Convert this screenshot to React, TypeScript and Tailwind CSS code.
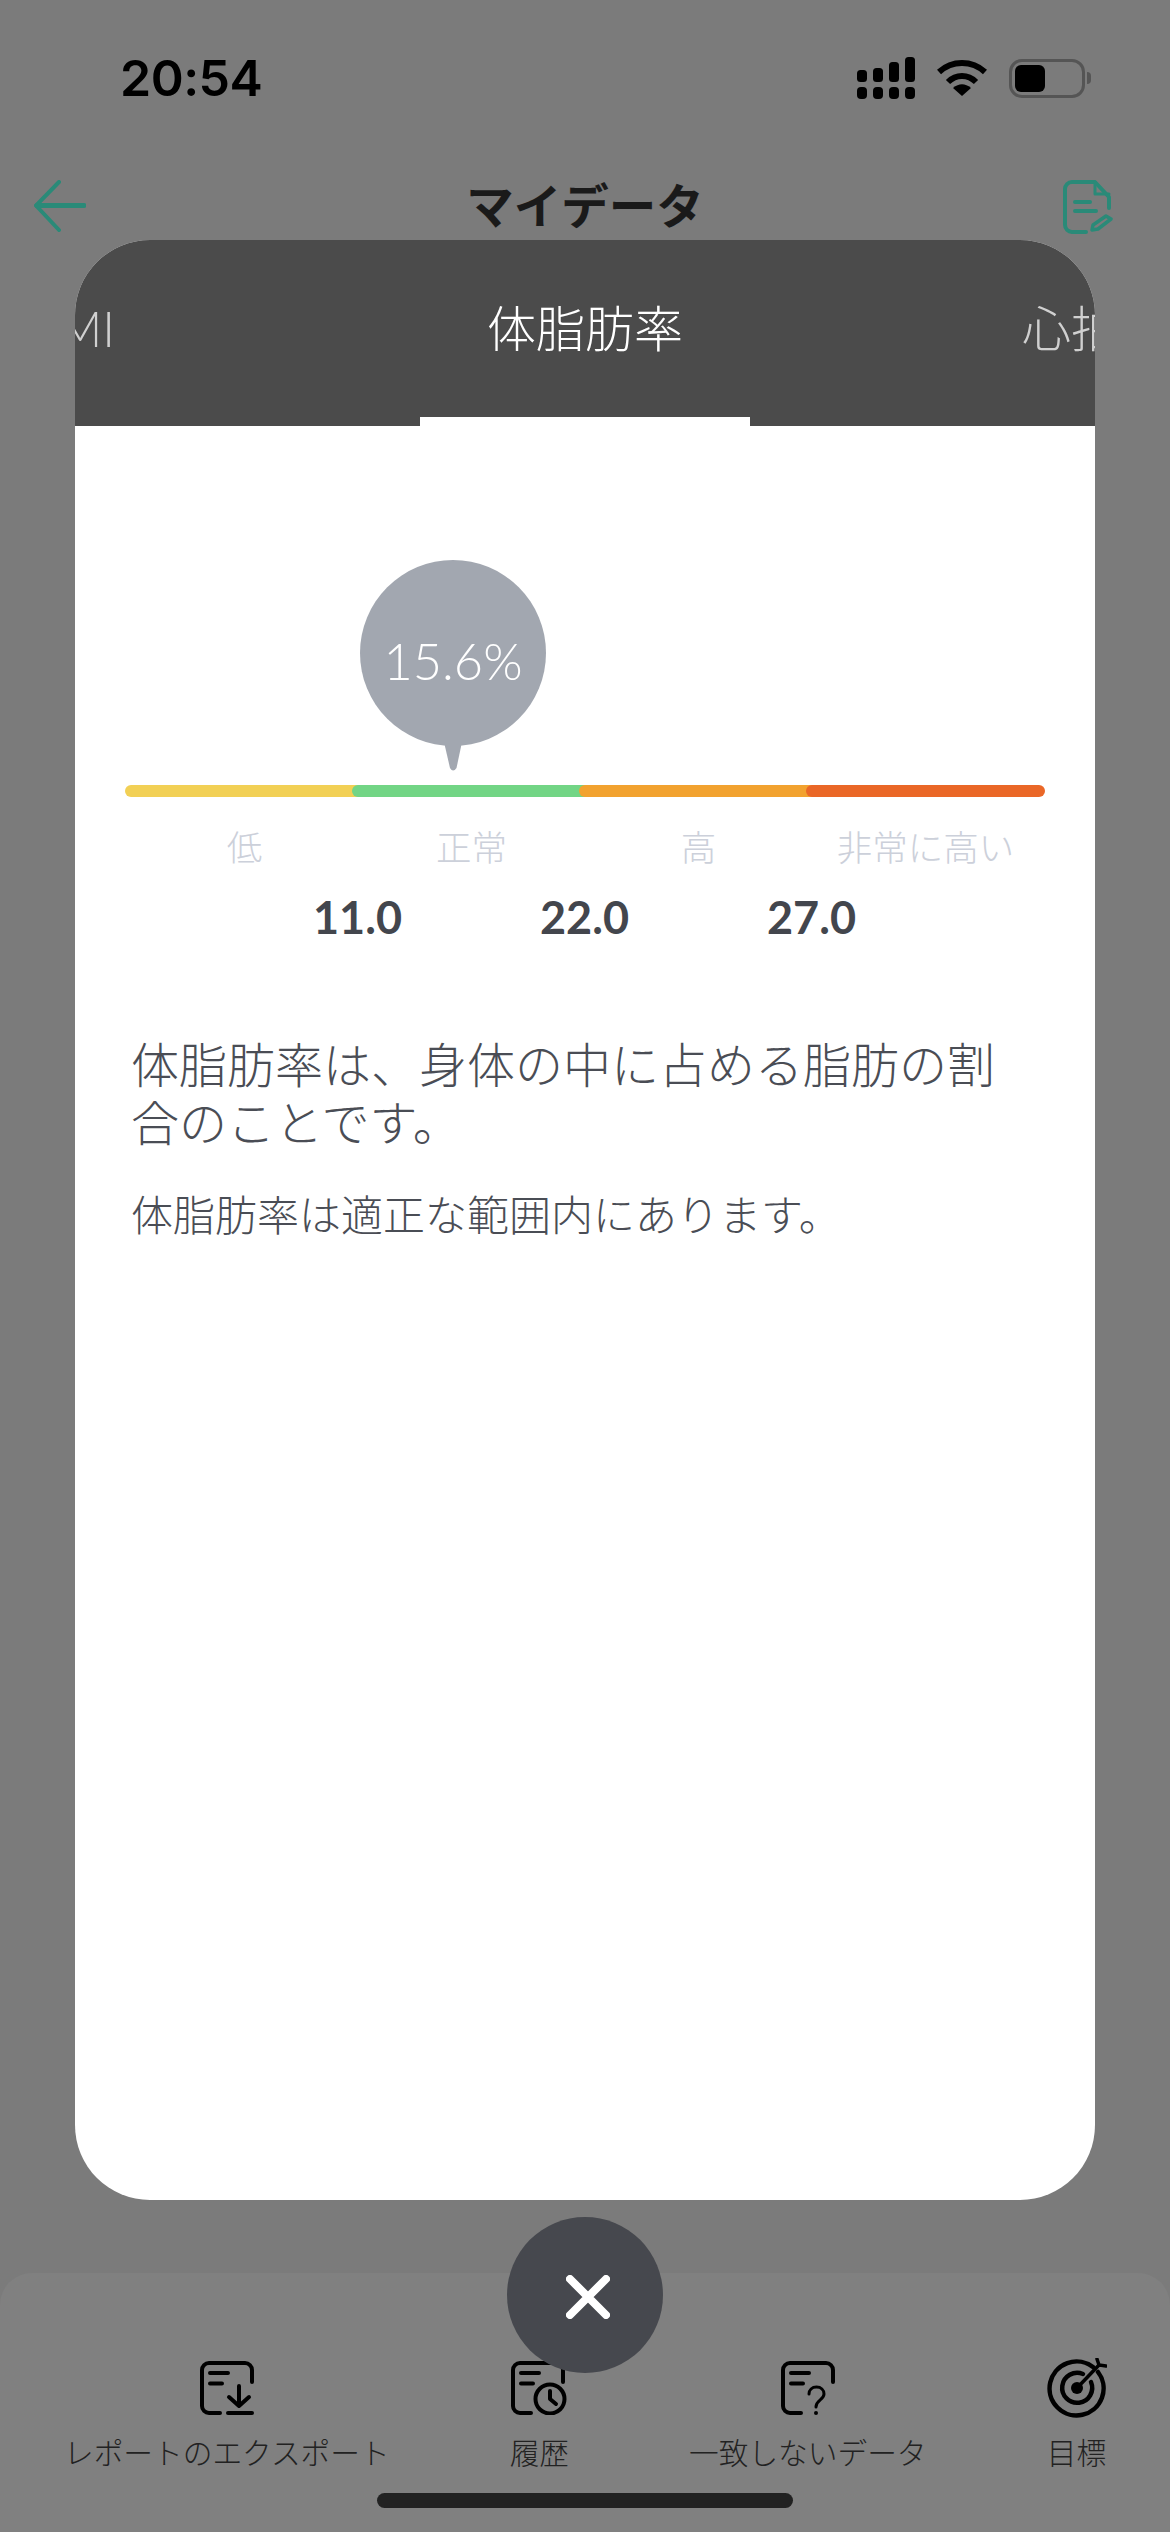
const teal = "#2a8a78";

function SignalIcon() {
  return (
    <svg width="58" height="42" viewBox="0 0 58 42" fill="#000">
      <rect x="0" y="13" width="10" height="12" rx="3.5" />
      <rect x="16" y="11" width="10" height="14" rx="3.5" />
      <rect x="32" y="5" width="10" height="20" rx="3.5" />
      <rect x="48" y="0" width="10" height="25" rx="3.5" />
      <rect x="0" y="30" width="10" height="12" rx="4" />
      <rect x="16" y="30" width="10" height="12" rx="4" />
      <rect x="32" y="30" width="10" height="12" rx="4" />
      <rect x="48" y="30" width="10" height="12" rx="4" />
    </svg>
  );
}

function WifiIcon() {
  return (
    <svg width="50" height="38" viewBox="0 0 50 38" fill="none" stroke="#000" strokeWidth="6">
      <path d="M2 13C15 1 35 1 48 13" />
      <path d="M11 23C19 15 31 15 39 23" />
      <path d="M25 37L16 29C22 24 28 24 34 29Z" fill="#000" stroke="none" />
    </svg>
  );
}

function BatteryIcon() {
  return (
    <div className="flex items-center">
      <div className="flex h-[39px] w-[76px] items-center rounded-[13px] border-[3px] border-[#555555] p-[3px]">
        <div className="h-[27px] w-[30px] rounded-[6px] bg-black" />
      </div>
      <div className="ml-[2px] h-[12px] w-[4px] rounded-r-full bg-[#555555]" />
    </div>
  );
}

function BackIcon() {
  return (
    <svg width="52" height="52" viewBox="0 0 52 52" fill="none" stroke={teal} strokeWidth="5" strokeLinecap="round">
      <path d="M25 2L2 25.500L25 50" strokeWidth="4" />
      <path d="M3 25.500H50" />
    </svg>
  );
}

function EditIcon() {
  return (
    <svg width="50" height="54" viewBox="0 0 50 54" fill="none" stroke={teal} strokeWidth="4" strokeLinecap="round" strokeLinejoin="round">
      <path d="M23 52H9a7 7 0 0 1-7-7V9a7 7 0 0 1 7-7h23l14 15v11" />
      <path d="M32 2v12h14" strokeWidth="3" />
      <path d="M12 22h15M12 31h21" />
      <path d="M29 50l1-5 13-9 5 3-13 10z" strokeWidth="3.500" />
    </svg>
  );
}

function DocOutline() {
  return <path d="M52 21V9a7 7 0 0 0-7-7H9a7 7 0 0 0-7 7v36a7 7 0 0 0 7 7h11" />;
}

function ExportIcon() {
  return (
    <svg width="54" height="54" viewBox="0 0 54 54" fill="none" stroke="#000" strokeWidth="4" strokeLinecap="round" strokeLinejoin="round">
      <DocOutline />
      <path d="M10 12h18M10 22.500h12" />
      <path d="M39 25v19M29 36l10 9 10-9" />
      <path d="M28 52h24" />
    </svg>
  );
}

function HistoryIcon() {
  return (
    <svg width="56" height="54" viewBox="0 0 56 54" fill="none" stroke="#000" strokeWidth="4" strokeLinecap="round" strokeLinejoin="round">
      <DocOutline />
      <path d="M10 12h18M10 22.500h12" />
      <circle cx="39" cy="38" r="14.500" />
      <path d="M39 30v8l6 5" />
    </svg>
  );
}

function QuestionIcon() {
  return (
    <svg width="54" height="54" viewBox="0 0 54 54" fill="none" stroke="#000" strokeWidth="4" strokeLinecap="round" strokeLinejoin="round">
      <DocOutline />
      <path d="M10 12h18M10 22.500h12" />
      <path d="M28 33c0-4 3-7 7.500-7s7.500 3 7.500 7c0 6-8 6-8 13" strokeWidth="3" />
      <circle cx="35" cy="52" r="2" fill="#000" stroke="none" />
    </svg>
  );
}

function TargetIcon() {
  return (
    <svg width="60" height="60" viewBox="0 0 60 60" fill="none" stroke="#000" strokeWidth="4.500" strokeLinecap="round">
      <path d="M46 9A27 27 0 1 0 51 14" />
      <path d="M36 16A15 15 0 1 0 44 24" />
      <circle cx="30" cy="30" r="6" fill="#000" stroke="none" />
      <path d="M30 30L52 7M50 1l2 6 7 1" strokeWidth="3.500" />
    </svg>
  );
}

const scale = [
  { label: "低", bar: "w-[233px] bg-[#f2d055]" },
  { label: "正常", bar: "-ml-[6px] w-[233px] rounded-l-full bg-[#72d585]" },
  { label: "高", bar: "-ml-[6px] w-[233px] rounded-l-full bg-[#f2a22f]" },
  { label: "非常に高い", bar: "-ml-[6px] w-[245px] rounded-l-full bg-[#ea6727]" },
];

const actions = [
  { label: "レポートのエクスポート", icon: <ExportIcon /> },
  { label: "履歴", icon: <HistoryIcon /> },
  { label: "一致しないデータ", icon: <QuestionIcon /> },
  { label: "目標", icon: <TargetIcon /> },
];

export default function App() {
  return (
    <main className="relative flex h-[2532px] w-[1170px] flex-col overflow-hidden bg-[#7b7b7b] font-['Lato','Noto_Sans_CJK_JP',sans-serif]">
      <div className="flex h-[156px] items-center justify-between pr-[79px] pl-[120px]">
        <span className="font-['Inter',sans-serif] text-[50px] font-semibold tracking-[-0.5px] text-black">20:54</span>
        <div className="flex items-center gap-[22px]">
          <SignalIcon />
          <WifiIcon />
          <BatteryIcon />
        </div>
      </div>

      <div className="grid grid-cols-[1fr_auto_1fr] items-start px-[57px] pt-[24px]">
        <div className="-ml-[23px]">
          <BackIcon />
        </div>
        <h1 className="text-[47.500px] leading-[52px] font-bold text-[#1a1a1a]">マイデータ</h1>
        <div className="justify-self-end">
          <EditIcon />
        </div>
      </div>

      <div className="mt-auto h-[259px] rounded-t-[32px] bg-[#808080]">
        <div className="flex gap-[120px] pt-[85px] pl-[64px]">
          {actions.map((a) => (
            <div key={a.label} className="flex flex-col items-center whitespace-nowrap">
              <div className="flex h-[60px] items-center">{a.icon}</div>
              <div className="mt-[15px] text-[29.700px] leading-[40px] font-light text-[#222222]">{a.label}</div>
            </div>
          ))}
        </div>
      </div>

      <div className="absolute bottom-[24px] left-[377px] h-[15px] w-[416px] rounded-full bg-[#222222]" />

      <div className="absolute top-[240px] left-[75px] flex h-[1960px] w-[1020px] flex-col overflow-hidden rounded-[75px] bg-white">
        <div className="flex h-[186px] flex-col bg-[#4b4b4b]">
          <div className="flex h-[177px] items-center overflow-hidden pb-[2px] text-[49px] leading-[60px] font-light whitespace-nowrap">
            <div className="flex min-w-0 flex-1 basis-0 justify-end text-[#d0d0d0]">
              <span className="mr-[372px] shrink-0">BMI</span>
            </div>
            <div className="shrink-0 text-white">体脂肪率</div>
            <div className="flex min-w-0 flex-1 basis-0 text-[#d0d0d0]">
              <span className="ml-[339px] shrink-0">心拍数</span>
            </div>
          </div>
          <div className="h-[9px] w-[330px] self-center bg-white" />
        </div>

        <div className="flex flex-1 flex-col pt-[134px]">
          <div className="relative ml-[285px] flex h-[186px] w-[186px] items-center justify-center rounded-full bg-[#a2a7b0] pt-[16px] text-[50.500px] font-light text-white">
            15.6%
            <svg className="absolute top-[182px] left-[84px]" width="18" height="30" viewBox="0 0 18 30" fill="#a2a7b0">
              <path d="M0 0H18L12.500 26Q9 31 6 26Z" />
            </svg>
          </div>

          <div className="mx-[50px] mt-[39px] flex h-[12px] overflow-hidden rounded-full">
            {scale.map((s) => (
              <div key={s.label} className={`h-full shrink-0 ${s.bar}`} />
            ))}
          </div>

          <div className="mt-[26px] ml-[56px] grid w-[908px] grid-cols-4">
            {scale.map((s) => (
              <div key={s.label} className="text-center text-[35.500px] leading-[50px] font-light whitespace-nowrap text-[#ccd0da]">
                {s.label}
              </div>
            ))}
          </div>

          <div className="mt-[19px] ml-[169px] grid w-[681px] grid-cols-3">
            {["11.0", "22.0", "27.0"].map((v) => (
              <div key={v} className="text-center text-[45px] leading-[50px] font-bold text-[#43464d]">
                {v}
              </div>
            ))}
          </div>

          <div className="mt-[94px] ml-[56px] w-[885px] text-[#4a4d55]">
            <p className="text-[48px] leading-[58px] font-light">体脂肪率は、身体の中に占める脂肪の割合のことです。</p>
            <p className="mt-[34px] text-[42px] leading-[58px] font-light">体脂肪率は適正な範囲内にあります。</p>
          </div>
        </div>
      </div>

      <div className="absolute top-[2217px] left-[507px] flex h-[156px] w-[156px] items-center justify-center rounded-full bg-[#46484e]">
        <svg width="44" height="44" viewBox="0 0 44 44" fill="none" stroke="#fff" strokeWidth="8" strokeLinecap="round" className="translate-x-[3px] translate-y-[2px]">
          <path d="M4 4L40 40M40 4L4 40" />
        </svg>
      </div>
    </main>
  );
}
